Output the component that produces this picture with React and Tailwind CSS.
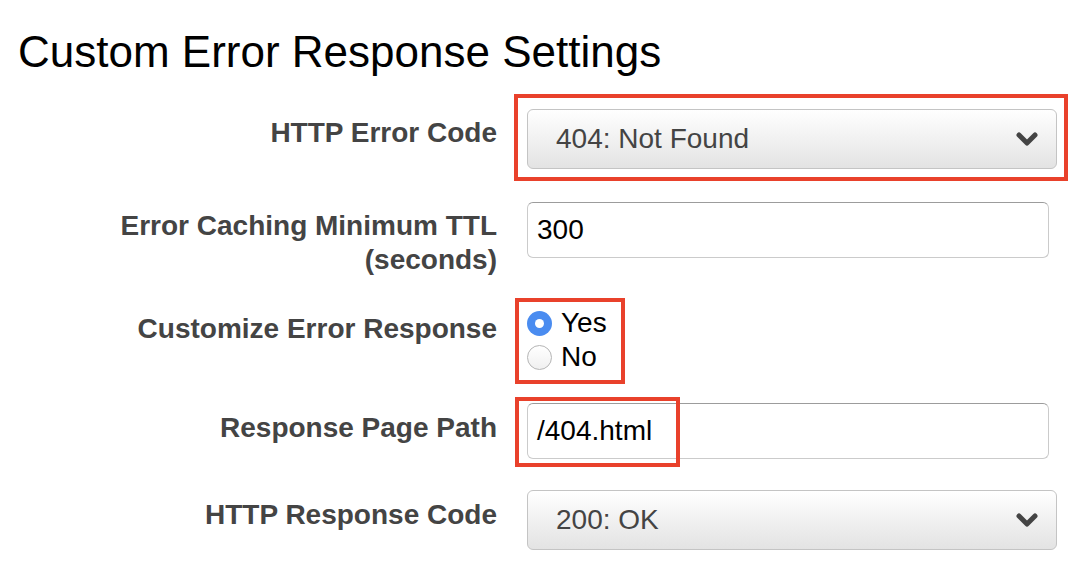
import React from 'react';

const Chevron = () => (
    <svg width="22" height="14" viewBox="0 0 22 14" className="shrink-0">
        <polyline points="3,3 11,11 19,3" fill="none" stroke="#444" strokeWidth="5" strokeLinecap="round" strokeLinejoin="round" />
    </svg>
);

const Select = ({ value }) => (
    <div className="w-[530px] h-[60px] rounded-[6px] border border-[#c4c4c4] bg-gradient-to-b from-white to-[#e3e3e3] flex items-center justify-between pl-[28px] pr-[18px] text-[28px] text-[#444]">
        <span>{value}</span>
        <Chevron />
    </div>
);

const TextInput = ({ value }) => (
    <div className="w-[522px] h-[56px] rounded-[6px] border border-[#cbcbcb] border-t-[#9c9c9c] bg-white flex items-center pl-[9px] text-[28px] text-black">
        {value}
    </div>
);

const Radio = ({ checked, label }) => (
    <label className="flex items-center gap-[9px] h-[34px] text-[28px] text-black">
        {checked ? (
            <span className="w-[25px] h-[25px] rounded-full bg-[#4a8cf0] flex items-center justify-center">
                <span className="w-[9px] h-[9px] rounded-full bg-white" />
            </span>
        ) : (
            <span className="w-[25px] h-[25px] rounded-full border border-[#b5b5b5] bg-gradient-to-b from-white to-[#f0f0f0]" />
        )}
        <span>{label}</span>
    </label>
);

const Row = ({ label, labelPad, children, className }) => (
    <div className={`flex items-start ${className}`}>
        <div className={`w-[497px] text-right font-bold text-[28px] leading-[34px] text-[#444] ${labelPad}`}>
            {label}
        </div>
        <div className="ml-[30px] relative">{children}</div>
    </div>
);

export default function App() {
    return (
        <div className="w-[1090px] h-[582px] bg-white overflow-hidden pt-[28px] font-['Liberation_Sans',Arial,sans-serif]">
            <h1 className="pl-[18px] text-[44px] leading-[48px] text-black">Custom Error Response Settings</h1>

            <Row label="HTTP Error Code" labelPad="pt-[7px]" className="mt-[33px]">
                <Select value="404: Not Found" />
                <div className="absolute -left-[13px] -top-[15px] -right-[11px] -bottom-[12px] border-[4px] border-[#e9412b]" />
            </Row>

            <Row
                label={<>Error Caching Minimum TTL<br />(seconds)</>}
                labelPad="pt-[7px]"
                className="mt-[33px]"
            >
                <TextInput value="300" />
            </Row>

            <Row label="Customize Error Response" labelPad="pt-[6px]" className="mt-[29px]">
                <div className="flex flex-col">
                    <Radio checked label="Yes" />
                    <Radio label="No" />
                </div>
                <div className="absolute -left-[12px] -top-[8px] w-[110px] h-[86px] border-[4px] border-[#e9412b]" />
            </Row>

            <Row label="Response Page Path" labelPad="pt-[8px]" className="mt-[29px]">
                <TextInput value="/404.html" />
                <div className="absolute -left-[12px] -top-[6px] w-[165px] h-[70px] border-[4px] border-[#e9412b]" />
            </Row>

            <Row label="HTTP Response Code" labelPad="pt-[8px]" className="mt-[31px]">
                <Select value="200: OK" />
            </Row>
        </div>
    );
}
